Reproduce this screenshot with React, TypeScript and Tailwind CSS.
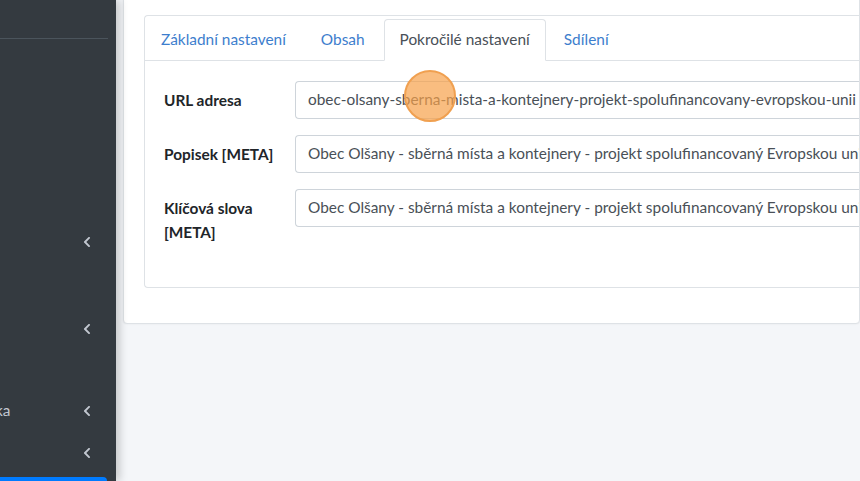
import { FaChevronLeft } from "react-icons/fa";

const font = { fontFamily: '"Lato", "Liberation Sans", sans-serif' };

const Chevron = () => (
  <FaChevronLeft className="h-[12px] w-[12px] text-[#c2c7d0]" />
);

const rows = [
  {
    label: ["URL adresa"],
    value: "obec-olsany-sberna-mista-a-kontejnery-projekt-spolufinancovany-evropskou-unii",
  },
  {
    label: ["Popisek [META]"],
    value: "Obec Olšany - sběrná místa a kontejnery - projekt spolufinancovaný Evropskou unií",
  },
  {
    label: ["Klíčová slova", "[META]"],
    value: "Obec Olšany - sběrná místa a kontejnery - projekt spolufinancovaný Evropskou unií",
  },
];

const Sidebar = () => (
  <aside className="relative z-10 flex h-[481px] w-[116px] shrink-0 flex-col bg-[#343a40] shadow-[4px_0_8px_rgba(0,0,0,0.18)]">
    <div className="mt-[38px] mr-[8px] border-t border-[#4b545c]" />
    <div className="mt-[196px] flex h-[14px] items-center justify-end pr-[23px]">
      <Chevron />
    </div>
    <div className="mt-[73px] flex h-[14px] items-center justify-end pr-[23px]">
      <Chevron />
    </div>
    <div className="mt-[68px] flex h-[14px] items-center justify-between pr-[23px]">
      <span className="ml-[-5px] text-[15.4px] leading-none text-[#c2c7d0]">ka</span>
      <Chevron />
    </div>
    <div className="mt-[28px] flex h-[14px] items-center justify-end pr-[23px]">
      <Chevron />
    </div>
    <div className="mt-auto mr-[9px] h-[4px] rounded-tr-[4px] bg-[#007bff]" />
  </aside>
);

export default function App() {
  return (
    <div className="flex h-[481px] w-[860px] overflow-hidden bg-[#f4f6f9] text-[15.4px]" style={font}>
      <Sidebar />
      <main className="min-w-0 flex-1 pl-[7px]">
        <div className="mt-[-10px] h-[334px] rounded-[4px] border border-[#dee2e6] bg-white pt-[24px] pl-[20px] shadow-[0_0_2px_rgba(0,0,0,0.08)]">
          <div className="h-[273px] rounded-l-[4px] border border-r-0 border-[#dee2e6]">
            <div className="flex h-[45px] items-end border-b border-[#dee2e6]">
              <a className="flex h-[41px] items-center px-[16px] text-[#3d7ecd]">
                Základní nastavení
              </a>
              <a className="flex h-[41px] items-center px-[19px] text-[#3d7ecd]">
                Obsah
              </a>
              <a className="mb-[-1px] flex h-[42px] items-center rounded-t-[4px] border border-b-white border-[#dee2e6] bg-white px-[15px] text-[#495057]">
                Pokročilé nastavení
              </a>
              <a className="flex h-[41px] items-center px-[18px] text-[#3d7ecd]">
                Sdílení
              </a>
            </div>
            <div className="flex flex-col gap-[16px] pt-[20px] pl-[19px]">
              {rows.map((r, i) => (
                <div key={i} className="flex items-start">
                  <div className="w-[131px] shrink-0 pt-[7px] font-bold leading-[24px] text-[#212529]">
                    {r.label.map((l) => (
                      <div key={l}>{l}</div>
                    ))}
                  </div>
                  <div className="flex h-[38px] min-w-0 flex-1 items-center overflow-hidden whitespace-nowrap rounded-l-[4px] border border-r-0 border-[#ced4da] bg-white pl-[12px] text-[#495057]">
                    {r.value}
                  </div>
                </div>
              ))}
            </div>
          </div>
        </div>
      </main>
      <div className="pointer-events-none absolute left-[404px] top-[70px] h-[52px] w-[52px] rounded-full border-2 border-[#f0a050] bg-[#f7a14a]/70" />
    </div>
  );
}
